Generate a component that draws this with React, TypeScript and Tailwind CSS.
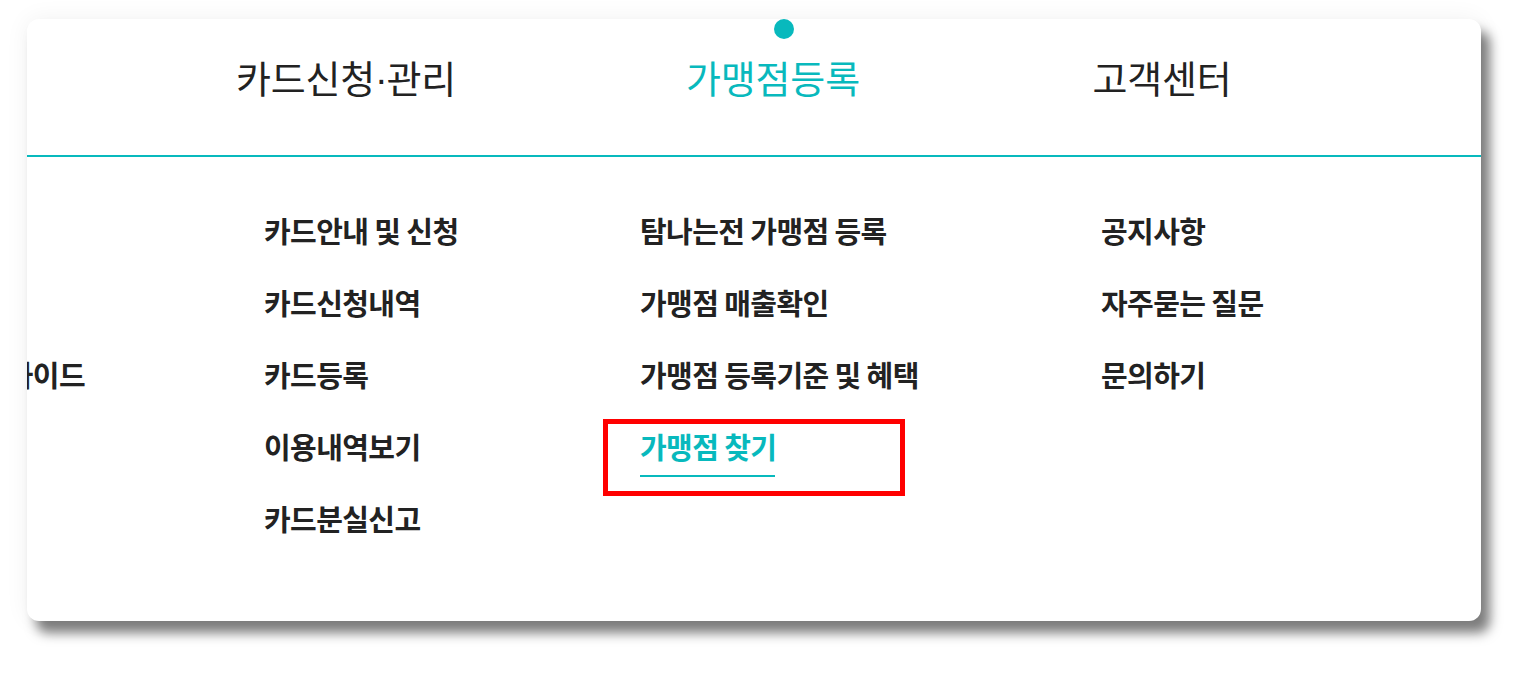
const TEAL = 'text-[#08b9bd]';

const TOP_NAV = [
  { label: '카드신청', rest: '관리', width: 'w-[400px]', gap: '' },
  { label: '가맹점등록', width: 'w-[400px]', gap: 'ml-[27px]', active: true },
  { label: '고객센터', width: 'w-[360px]', gap: 'ml-[9px]' },
];

const COLUMNS: { width: string; items: string[]; active?: string }[] = [
  { width: 'w-[376px]', items: ['카드안내 및 신청', '카드신청내역', '카드등록', '이용내역보기', '카드분실신고'] },
  {
    width: 'w-[461px]',
    items: ['탐나는전 가맹점 등록', '가맹점 매출확인', '가맹점 등록기준 및 혜택', '가맹점 찾기'],
    active: '가맹점 찾기',
  },
  { width: 'flex-1', items: ['공지사항', '자주묻는 질문', '문의하기'] },
];

function SubItem({ label, active }: { label: string; active?: boolean }) {
  return (
    <li className="h-[72px] leading-[72px] whitespace-nowrap">
      <span
        className={`relative inline-block leading-[72px] ${active ? TEAL : 'text-[#222222]'}`}
      >
        {label}
        {active && <span className="absolute left-0 right-[1px] bottom-[5px] h-[2px] bg-[#08b9bd]" />}
      </span>
    </li>
  );
}

export default function App() {
  return (
    <div
      className="w-[1526px] h-[674px] bg-white overflow-hidden pt-[19px] pl-[27px]"
      style={{ fontFamily: '"Noto Sans CJK KR", "Noto Sans", sans-serif' }}
    >
      <div className="relative w-[1454px] h-[602px] bg-white rounded-xl overflow-hidden shadow-[9px_12px_12px_rgba(0,0,0,0.5),0_0_24px_rgba(0,0,0,0.06)]">
        {/* top menu */}
        <nav className="flex h-[136px] pl-[119px]">
          {TOP_NAV.map((item) => (
            <div key={item.label} className={`relative h-full ${item.width} ${item.gap}`}>
              {item.active && (
                <span className="absolute top-0 left-[201px] w-5 h-5 rounded-full bg-[#08b9bd]" />
              )}
              <p
                className={`pt-[39px] text-center text-[38px] leading-none tracking-[-0.2px] ${
                  item.active ? TEAL : 'text-[#222222]'
                }`}
              >
                {item.label}
                {item.rest && (
                  <>
                    <span className="font-['Liberation_Sans'] tracking-[-1px]">·</span>
                    {item.rest}
                  </>
                )}
              </p>
            </div>
          ))}
        </nav>
        <div className="h-[2px] bg-[#08b9bd]" />

        {/* sub menu */}
        <div className="flex pt-[37px] text-[29px] font-semibold tracking-[-0.6px]">
          <ul className="w-[237px] pr-[179px]">
            <li className="h-[72px]" />
            <li className="h-[72px]" />
            <li className="h-[72px] leading-[72px] flex justify-end whitespace-nowrap text-[#222222]">
              <span>이용가이드</span>
            </li>
          </ul>
          {COLUMNS.map((col, i) => (
            <ul key={i} className={col.width}>
              {col.items.map((label) => (
                <SubItem key={label} label={label} active={label === col.active} />
              ))}
            </ul>
          ))}
        </div>

        {/* annotation box */}
        <div className="absolute left-[576px] top-[400px] w-[302px] h-[77px] border-[5px] border-[#ff0000]" />
      </div>
    </div>
  );
}
